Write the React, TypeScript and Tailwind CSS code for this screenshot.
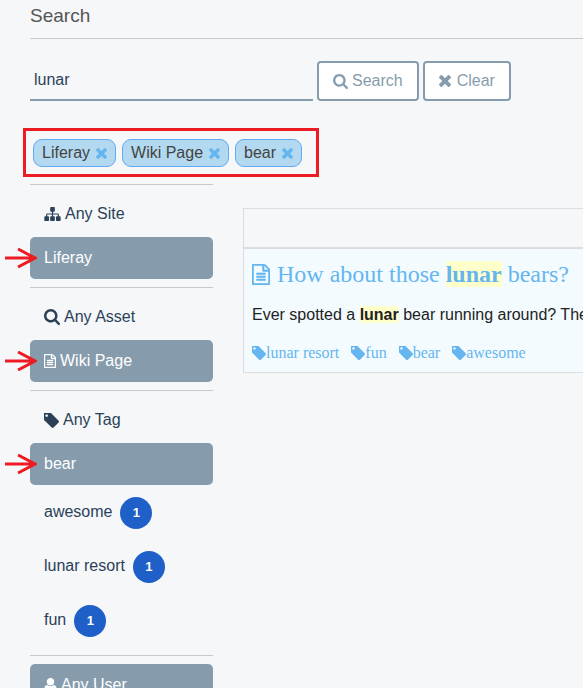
import type { ReactNode } from "react";

const icons = {
  search: {
    box: "64 128 1664 1664",
    d: "M1216 832q0-185-131.5-316.5t-316.5-131.5-316.5 131.5-131.5 316.5 131.5 316.5 316.5 131.5 316.5-131.5 131.5-316.5zm512 832q0 52-38 90t-90 38q-54 0-90-38l-343-342q-179 124-399 124-143 0-273.5-55.5t-225-150-150-225-55.5-273.5 55.5-273.5 150-225 225-150 273.5-55.5 273.5 55.5 225 150 150 225 55.5 273.5q0 220-124 399l343 343q37 37 37 90z",
  },
  times: {
    box: "302 366 1188 1188",
    d: "M1490 1322q0 40-28 68l-136 136q-28 28-68 28t-68-28l-294-294-294 294q-28 28-68 28t-68-28l-136-136q-28-28-28-68t28-68l294-294-294-294q-28-28-28-68t28-68l136-136q28-28 68-28t68 28l294 294 294-294q28-28 68-28t68 28l136 136q28 28 28 68t-28 68l-294 294 294 294q28 28 28 68z",
  },
  tag: {
    box: "192 192 1451 1451",
    d: "M576 448q0-53-37.5-90.5t-90.5-37.5-90.5 37.5-37.5 90.5 37.5 90.5 90.5 37.5 90.5-37.5 37.5-90.5zm1067 576q0 53-37 90l-491 492q-39 37-91 37-53 0-90-37l-715-716q-38-37-64.5-101t-26.5-117v-416q0-52 38-90t90-38h416q53 0 117 26.5t102 64.5l715 714q37 39 37 91z",
  },
  file: {
    box: "128 0 1536 1792",
    d: "M1596 380q28 28 48 76t20 88v1152q0 40-28 68t-68 28h-1344q-40 0-68-28t-28-68v-1600q0-40 28-68t68-28h896q40 0 88 20t76 48zm-444-244v376h376q-10-29-22-41l-313-313q-12-12-41-22zm384 1528v-1024h-416q-40 0-68-28t-28-68v-416h-768v1536h1280zm-1024-864q0-14 9-23t23-9h704q14 0 23 9t9 23v64q0 14-9 23t-23 9h-704q-14 0-23-9t-9-23v-64zm736 224q14 0 23 9t9 23v64q0 14-9 23t-23 9h-704q-14 0-23-9t-9-23v-64q0-14 9-23t23-9h704zm0 256q14 0 23 9t9 23v64q0 14-9 23t-23 9h-704q-14 0-23-9t-9-23v-64q0-14 9-23t23-9h704z",
  },
  sitemap: {
    box: "0 128 1792 1536",
    d: "M1792 1248v320q0 40-28 68t-68 28h-320q-40 0-68-28t-28-68v-320q0-40 28-68t68-28h96v-192h-512v192h96q40 0 68 28t28 68v320q0 40-28 68t-68 28h-320q-40 0-68-28t-28-68v-320q0-40 28-68t68-28h96v-192h-512v192h96q40 0 68 28t28 68v320q0 40-28 68t-68 28h-320q-40 0-68-28t-28-68v-320q0-40 28-68t68-28h96v-192q0-52 38-90t90-38h512v-192h-96q-40 0-68-28t-28-68v-320q0-40 28-68t68-28h320q40 0 68 28t28 68v320q0 40-28 68t-68 28h-96v192h512q52 0 90 38t38 90v192h96q40 0 68 28t28 68z",
  },
  user: {
    box: "256 128 1280 1536",
    d: "M1536 1399q0 109-62.5 187t-150.5 78h-854q-88 0-150.5-78t-62.5-187q0-85 8.5-160.5t31.5-152 58.5-131 94-89 134.5-34.5q131 128 313 128t313-128q76 0 134.5 34.5t94 89 58.5 131 31.5 152 8.5 160.5zm-256-887q0 159-112.5 271.5t-271.5 112.5-271.5-112.5-112.5-271.5 112.5-271.5 271.5-112.5 271.5 112.5 112.5 271.5z",
  },
};

function Icon({ name, className }: { name: keyof typeof icons; className: string }) {
  return (
    <svg viewBox={icons[name].box} className={`shrink-0 fill-current ${className}`} aria-hidden="true">
      <path d={icons[name].d} />
    </svg>
  );
}

function Chip({ label }: { label: string }) {
  return (
    <button
      type="button"
      className="flex h-7 items-center gap-1.5 rounded-[9px] border border-[#62a9f7] bg-[#b2d9ef] px-2 text-[#444]"
    >
      {label}
      <Icon name="times" className="mt-0.5 size-[11px] text-[#65b6f0]" />
    </button>
  );
}

function Facet({ children }: { children: ReactNode }) {
  return <li className="flex flex-col gap-0.5 border-t border-[#c8cbce] py-2">{children}</li>;
}

function FacetLink({ selected, children }: { selected?: boolean; children: ReactNode }) {
  return (
    <a
      href="#"
      className={`flex h-[42px] items-center gap-1 rounded-[5px] px-3.5 ${
        selected ? "bg-[#869cad] text-white" : "text-[#2b4158]"
      }`}
    >
      {children}
    </a>
  );
}

function Pointed({ children }: { children: ReactNode }) {
  return (
    <div className="relative">
      {children}
      <svg
        viewBox="0 0 32 20"
        className="absolute top-[11px] -left-[25px] h-5 w-8 fill-none stroke-[#ed1c24] stroke-3"
        aria-hidden="true"
      >
        <path d="M0 10H29M13 1L30 10L13 19" />
      </svg>
    </div>
  );
}

function CountLink({ label }: { label: string }) {
  return (
    <a href="#" className="flex h-[52px] items-baseline gap-2 px-3.5 pt-2.5 text-[#2b4158]">
      {label}
      <span className="size-8 rounded-full bg-[#1f5fc8] text-center text-[13px] leading-8 font-bold text-white">1</span>
    </a>
  );
}

function Mark({ children }: { children: ReactNode }) {
  return <mark className="bg-[#ffffcc] font-bold text-inherit">{children}</mark>;
}

const resultTags = ["lunar resort", "fun", "bear", "awesome"];

export default function App() {
  return (
    <div className="h-screen overflow-hidden bg-[#f5f7f9] pl-[30px] font-['Liberation_Sans',Arial,sans-serif] text-base leading-6">
      <h1 className="flex h-[39px] items-center border-b border-[#c8cbce] pb-1.5 text-[19px] text-[#555]">Search</h1>

      <form className="mt-[22px] flex gap-1" onSubmit={(e) => e.preventDefault()}>
        <input
          type="text"
          aria-label="Search terms"
          defaultValue="lunar"
          className="h-10 w-[283px] border-b-2 border-[#869cad] bg-transparent px-1 text-[#2b4158] outline-none"
        />
        <button
          type="submit"
          className="flex h-10 items-center gap-1 rounded-[4px] border-2 border-[#869cad] bg-white px-3.5 text-[#869cad]"
        >
          <Icon name="search" className="size-[15px]" />
          Search
        </button>
        <button
          type="reset"
          className="flex h-10 items-center gap-1.5 rounded-[4px] border-2 border-[#869cad] bg-white px-3.5 text-[#869cad]"
        >
          <Icon name="times" className="size-3" />
          Clear
        </button>
      </form>

      <div className="mt-[27px] -ml-[7px] flex h-[49px] w-fit items-center gap-1.5 border-3 border-[#ed1c24] pr-3.5 pl-[7px]">
        <Chip label="Liferay" />
        <Chip label="Wiki Page" />
        <Chip label="bear" />
      </div>

      <div className="mt-[7px] flex gap-[30px]">
        <ul className="w-[183px] shrink-0">
          <Facet>
            <FacetLink>
              <Icon name="sitemap" className="h-3.5 w-[17px]" />
              Any Site
            </FacetLink>
            <Pointed>
              <FacetLink selected>Liferay</FacetLink>
            </Pointed>
          </Facet>
          <Facet>
            <FacetLink>
              <Icon name="search" className="size-4" />
              Any Asset
            </FacetLink>
            <Pointed>
              <FacetLink selected>
                <Icon name="file" className="h-3.5 w-3 stroke-current stroke-[50]" />
                Wiki Page
              </FacetLink>
            </Pointed>
          </Facet>
          <Facet>
            <FacetLink>
              <Icon name="tag" className="size-[15px]" />
              Any Tag
            </FacetLink>
            <Pointed>
              <FacetLink selected>bear</FacetLink>
            </Pointed>
            <CountLink label="awesome" />
            <CountLink label="lunar resort" />
            <CountLink label="fun" />
          </Facet>
          <Facet>
            <FacetLink selected>
              <Icon name="user" className="h-[15px] w-[13px]" />
              Any User
            </FacetLink>
          </Facet>
        </ul>

        <main className="mt-6 min-w-0 flex-1">
          <div className="h-[39px] border border-r-0 border-b-0 border-[#dddddd]" />
          <article className="overflow-hidden border border-t-2 border-r-0 border-[#dddddd] bg-[#f3fbff] px-2 pt-[9px] pb-[7px] whitespace-nowrap">
            <h2 className="font-['Liberation_Serif','Times_New_Roman',serif] text-2xl leading-8 text-[#65b6f0]">
              <a href="#" className="flex items-center gap-[7px]">
                <Icon name="file" className="h-[21px] w-[18px] stroke-current stroke-[50]" />
                <span>
                  How about those <Mark>lunar</Mark> bears?
                </span>
              </a>
            </h2>
            <p className="mt-[13px] text-[#222]">
              Ever spotted a <Mark>lunar</Mark> bear running around? The
            </p>
            <ul className="mt-3.5 flex gap-3 font-['Liberation_Serif','Times_New_Roman',serif] text-[#65b6f0]">
              {resultTags.map((tag) => (
                <li key={tag}>
                  <a href="#" className="flex items-center">
                    <Icon name="tag" className="size-3.5" />
                    {tag}
                  </a>
                </li>
              ))}
            </ul>
          </article>
        </main>
      </div>
    </div>
  );
}
